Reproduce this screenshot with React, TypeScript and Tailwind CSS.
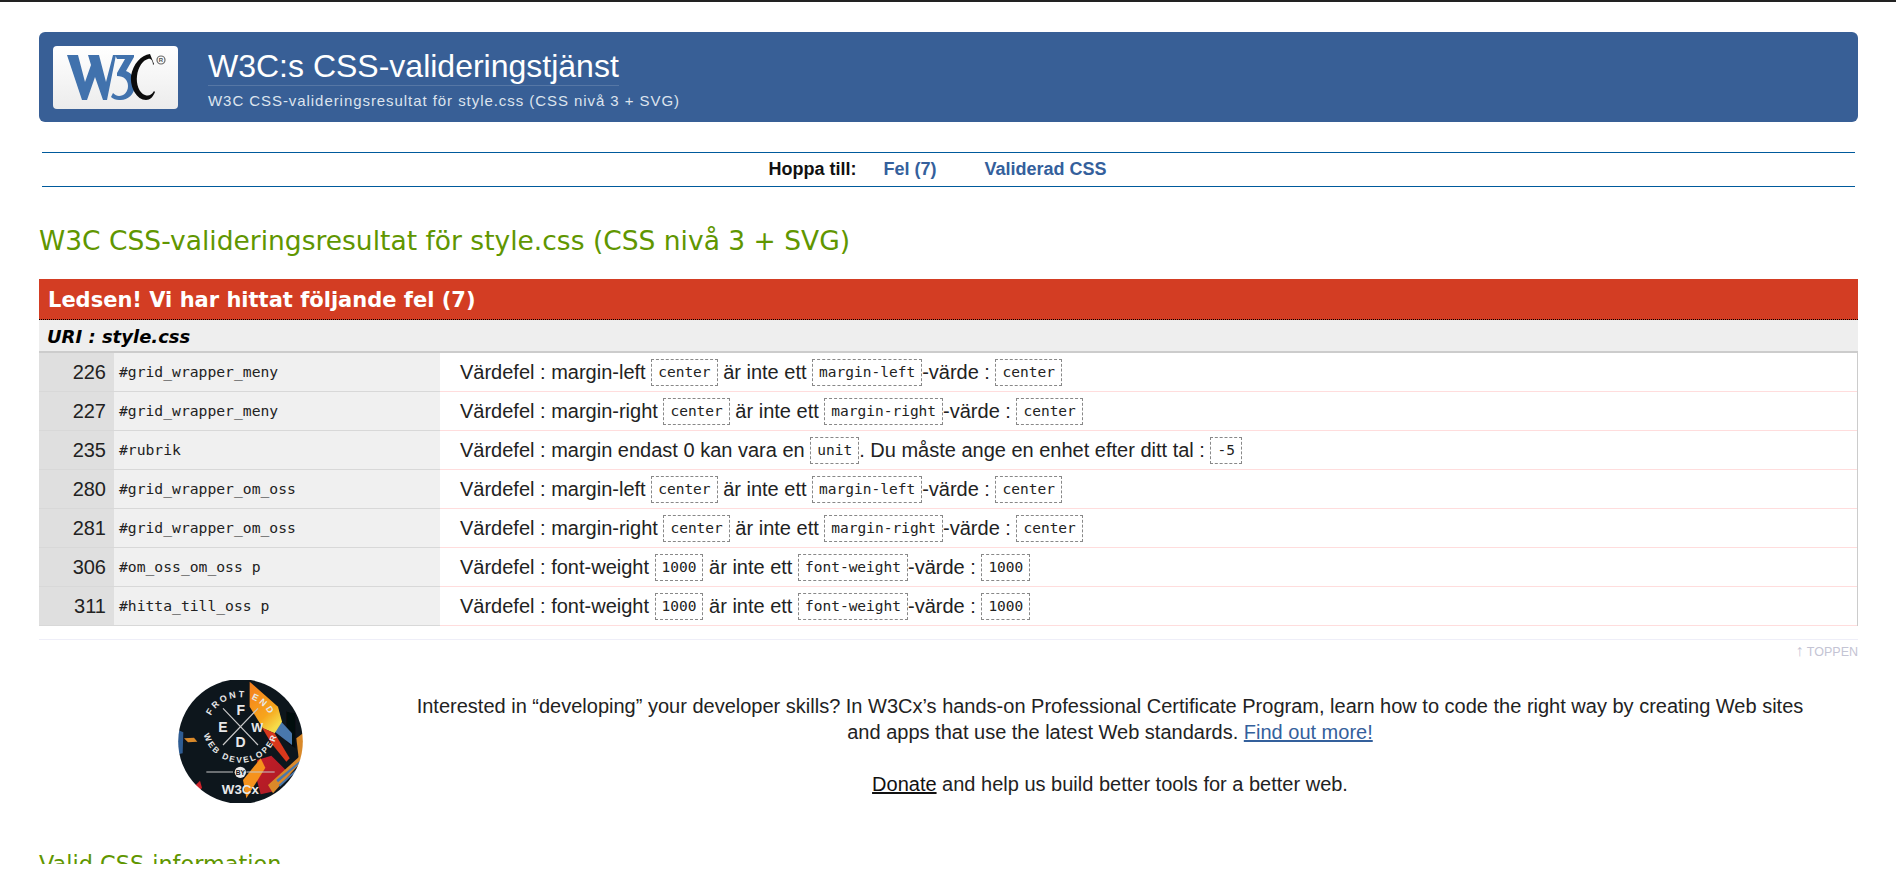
const rows: [string, string, (string | { c: string })[]][] = [
  ["226", "#grid_wrapper_meny", ["Värdefel : margin-left ", { c: "center" }, " är inte ett ", { c: "margin-left" }, "-värde : ", { c: "center" }]],
  ["227", "#grid_wrapper_meny", ["Värdefel : margin-right ", { c: "center" }, " är inte ett ", { c: "margin-right" }, "-värde : ", { c: "center" }]],
  ["235", "#rubrik", ["Värdefel : margin endast 0 kan vara en ", { c: "unit" }, ". Du måste ange en enhet efter ditt tal : ", { c: "-5" }]],
  ["280", "#grid_wrapper_om_oss", ["Värdefel : margin-left ", { c: "center" }, " är inte ett ", { c: "margin-left" }, "-värde : ", { c: "center" }]],
  ["281", "#grid_wrapper_om_oss", ["Värdefel : margin-right ", { c: "center" }, " är inte ett ", { c: "margin-right" }, "-värde : ", { c: "center" }]],
  ["306", "#om_oss_om_oss p", ["Värdefel : font-weight ", { c: "1000" }, " är inte ett ", { c: "font-weight" }, "-värde : ", { c: "1000" }]],
  ["311", "#hitta_till_oss p", ["Värdefel : font-weight ", { c: "1000" }, " är inte ett ", { c: "font-weight" }, "-värde : ", { c: "1000" }]],
];

const mono = "font-['DejaVu_Sans_Mono',monospace]";

function W3CLogo() {
  return (
    <svg viewBox="0 0 125 63" className="w-[125px] h-[63px] shrink-0">
      <defs>
        <linearGradient id="lg" x1="0" y1="0" x2="0" y2="1">
          <stop offset="0" stopColor="#ffffff" />
          <stop offset="1" stopColor="#ececec" />
        </linearGradient>
      </defs>
      <rect width="125" height="63" rx="4" fill="url(#lg)" />
      <path d="M14 9H25L32 36L38 19L35 9H46L53 36L60 9H63L54 54H50L42 31L34 54H29Z" fill="#4172ad" />
      <path d="M62 9H81V11L73 25C79 27 83 33 82 40C81 49 74 55 66 54C63 54 60 53 58 51L60 47C62 49 64 50 66 50C71 50 75 46 75 40C75 34 71 30 64 30V27L72 13H64Z" fill="#4172ad" />
      <path d="M97 8C88 9 80 18 78 30C77 42 84 54 93 54C97 54 100 51 102 46L101 45C98 50 95 50 92 49C86 47 83 38 84 30C85 21 90 14 95 13C98 12 100 15 100 19L101 18Z" fill="#0c0c0c" />
      <circle cx="108" cy="14" r="4" fill="none" stroke="#666" strokeWidth="1.2" />
      <text x="108" y="16.2" textAnchor="middle" fontSize="6" fontWeight="700" fill="#555" fontFamily="Liberation Sans">R</text>
    </svg>
  );
}

function BadgeLogo() {
  const t = { textAnchor: "middle" as const, fontFamily: "Liberation Sans", fontWeight: 700, fill: "#e8e8e8" };
  return (
    <svg viewBox="10 5 375 369" className="w-[125px] h-[123px] shrink-0">
      <defs>
        <clipPath id="cc"><circle cx="197.5" cy="189.5" r="187" /></clipPath>
        <linearGradient id="og" x1="0" y1="0" x2="0.6" y2="1">
          <stop offset="0" stopColor="#f47c1e" />
          <stop offset="0.7" stopColor="#f7a51d" />
          <stop offset="1" stopColor="#f5dc4a" />
        </linearGradient>
        <linearGradient id="rd" x1="0" y1="0" x2="1" y2="1">
          <stop offset="0" stopColor="#c41f2a" />
          <stop offset="1" stopColor="#a81c24" />
        </linearGradient>
        <path id="top" d="M 100 145 A 98 98 0 0 1 295 145" />
        <path id="bot" d="M 84 150 A 114 114 0 0 0 311 150" />
        <filter id="soft"><feGaussianBlur stdDeviation="1.4" /></filter>
      </defs>
      <g clipPath="url(#cc)" filter="url(#soft)">
        <rect x="0" y="0" width="400" height="380" fill="#10141b" />
        <path d="M335 100L362 105V210L335 190Z" fill="#05070b" />
        <path d="M310 120L352 165V200L300 160Z" fill="#4a78ac" />
        <path d="M225 10L310 85L322 130L300 165L265 150L225 85Z" fill="url(#og)" />
        <path d="M262 148L300 165L345 240L335 250L290 195Z" fill="#d8371f" />
        <path d="M248 245L290 232L348 290L292 340L258 348L245 300Z" fill="url(#rd)" />
        <path d="M205 305L258 240L272 268L215 360Z" fill="#f5921d" />
        <path d="M365 180L385 165V245L372 240Z" fill="#d9892b" />
        <path d="M280 320L385 225V245L295 345Z" fill="#d9892b" />
        <path d="M305 305L385 240V246L310 312ZM312 320L385 255V260L316 325Z" fill="#4a78ac" />
        <path d="M10 155L26 162L24 225L10 228Z" fill="#2f5c92" />
        <path d="M28 180L58 178L68 190L40 192Z" fill="#d98a2b" />
        <path d="M58 325L76 307L82 328L70 345Z" fill="#c9222a" />
      </g>
      <g stroke="#c8c8c8" strokeWidth="3.5" fill="none">
        <path d="M145 90L250 200M250 90L145 200" />
        <path d="M95 281H175M215 281H300" />
      </g>
      <text {...t} fontSize="27" letterSpacing="7">
        <textPath href="#top" startOffset="50%">FRONT  END</textPath>
      </text>
      <text {...t} fontSize="25" letterSpacing="6">
        <textPath href="#bot" startOffset="50%">WEB DEVELOPER</textPath>
      </text>
      <text {...t} x="198" y="110" fontSize="42">F</text>
      <text {...t} x="145" y="160" fontSize="42">E</text>
      <text {...t} x="248" y="160" fontSize="38">W</text>
      <text {...t} x="198" y="205" fontSize="42">D</text>
      <circle cx="197" cy="282" r="17" fill="#e8e8e8" />
      <text {...t} x="197" y="290" fontSize="20" fill="#11151c">BY</text>
      <text {...t} x="197" y="348" fontSize="40">W3Cx</text>
    </svg>
  );
}

export default function App() {
  return (
    <div className="h-[864px] overflow-hidden bg-white border-t-2 border-[#222] font-['Liberation_Sans',sans-serif] text-[#222]">
      <div className="px-[39px] pr-[38px] pt-[30px]">
        <header className="h-[90px] bg-[#385f96] rounded-[6px] flex items-center pl-[14px] text-white">
          <W3CLogo />
          <div className="ml-[30px] pt-[4px]">
            <div className="text-[32px] leading-[38px] border-b border-[#5677a5] w-fit">W3C:s CSS-valideringstjänst</div>
            <div className="text-[15px] tracking-[0.94px] leading-[20px] text-[#dde4ee] mt-[5px]">W3C CSS-valideringsresultat för style.css (CSS nivå 3 + SVG)</div>
          </div>
        </header>
        <nav className="mx-[3px] mt-[30px] h-[35px] border-y border-[#005a9c] flex items-center justify-center pr-[22px] text-[18px] font-bold">
          <span className="text-[#111]">Hoppa till:</span>
          <a className="ml-[27px] text-[#34609c]">Fel (7)</a>
          <a className="ml-[48px] text-[#34609c]">Validerad CSS</a>
        </nav>
        <h2 className="mt-[34px] h-[40px] text-[26.5px] leading-[40px] text-[#609600] font-['DejaVu_Sans',sans-serif]">
          W3C CSS-valideringsresultat för style.css (CSS nivå 3 + SVG)
        </h2>
        <div className="mt-[18px] h-[41px] pt-[3px] bg-[#d33d23] border-b border-dotted border-black flex items-center pl-[9px] text-white font-bold text-[21px] font-['DejaVu_Sans',sans-serif]">
          Ledsen! Vi har hittat följande fel (7)
        </div>
        <div className="h-[33px] pt-[2px] bg-[#eeeeee] border-b-2 border-[#cccccc] flex items-center pl-[8px] text-[18px] font-bold italic text-black font-['DejaVu_Sans',sans-serif]">
          URI : style.css
        </div>
        <div className="border-r border-[#cccccc]">
          {rows.map((r) => (
            <div key={r[0]} className="flex h-[39px]">
              <div className="w-[75px] bg-[#dfdfdf] border-b border-[#d8d8d8] text-[20px] flex items-center justify-end pr-[8px]">{r[0]}</div>
              <div className={`w-[326px] bg-[#f0f0f0] border-b border-[#d8d8d8] text-[14.7px] flex items-center pl-[5px] ${mono}`}>{r[1]}</div>
              <div className="flex-1 border-b border-[#ffdddd] pl-[20px] text-[20px] flex items-center whitespace-pre">
                {r[2].map((p, i) =>
                  typeof p === "string" ? (
                    <span key={i}>{p}</span>
                  ) : (
                    <code key={i} className={`border border-dashed border-[#888] h-[27px] px-[6px] pt-[2px] text-[14.5px] flex items-center ${mono}`}>{p.c}</code>
                  )
                )}
              </div>
            </div>
          ))}
        </div>
        <div className="mt-[13px] border-t border-[#eeeef8] text-right text-[12.5px] leading-[24px] h-[25px] text-[#c4c4d4]"><span className="text-[16px] leading-[16px]">↑</span> TOPPEN</div>
        <div className="mt-[16px] flex items-start pl-[139px]">
          <BadgeLogo />
          <div className="ml-[92px] w-[1430px] text-center text-[20px] leading-[26px] pt-[13px]">
            <p>Interested in “developing” your developer skills? In W3Cx’s hands-on Professional Certificate Program, learn how to code the right way by creating Web sites<br />and apps that use the latest Web standards. <a className="underline text-[#34609c]">Find out more!</a></p>
            <p className="mt-[26px]"><a className="underline text-[#111]">Donate</a> and help us build better tools for a better web.</p>
          </div>
        </div>
        <h2 className="mt-[46px] text-[22.4px] leading-[30px] text-[#609600] font-['DejaVu_Sans',sans-serif]">Valid CSS-information</h2>
      </div>
    </div>
  );
}
